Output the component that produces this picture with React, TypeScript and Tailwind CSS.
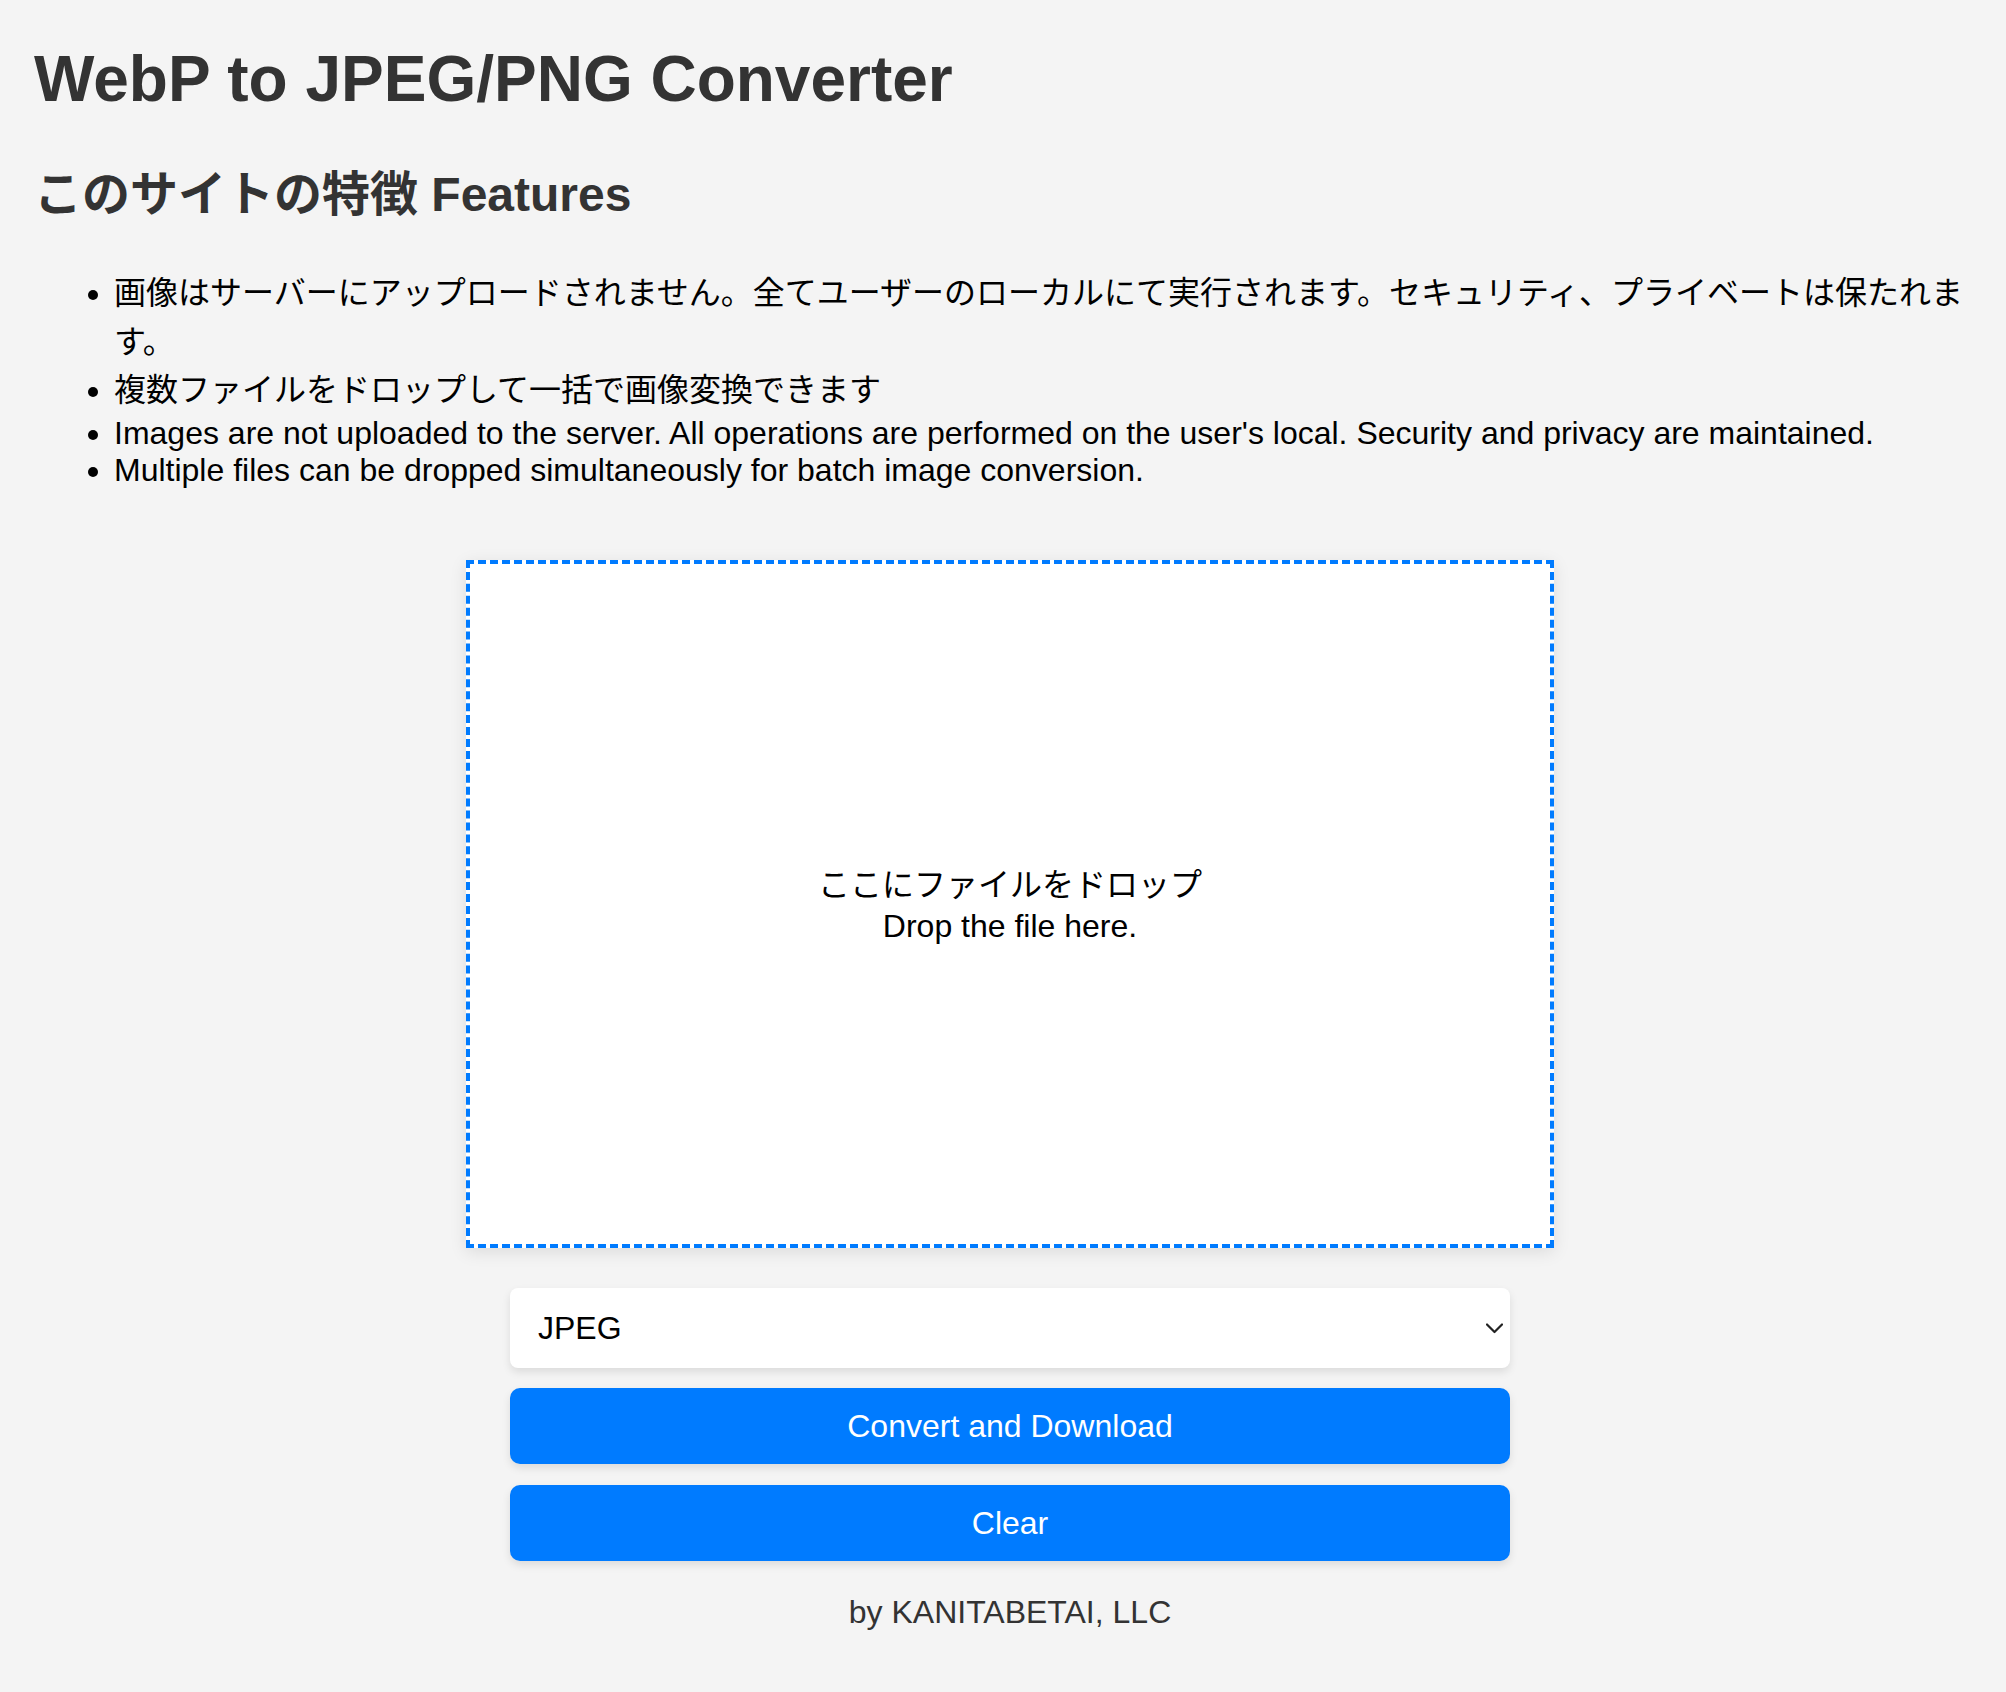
import React from "react";

export default function App() {
  return (
    <div
      className="min-h-[1692px] w-full bg-[#f4f4f4] px-[34px] text-[32px] text-black"
      style={{ fontFamily: '"Liberation Sans", "Noto Sans CJK JP", sans-serif' }}
    >
      <h1 className="pt-[42px] text-[64px] font-bold leading-[74px] text-[#333]">
        WebP to JPEG/PNG Converter
      </h1>
      <h2 className="mt-[50px] text-[48px] font-bold leading-[58px] text-[#333]">
        このサイトの特徴 Features
      </h2>
      <ul className="mt-[45px] list-disc pl-[80px]">
        <li className="leading-[48.5px]">
          画像はサーバーにアップロードされません。全てユーザーのローカルにて実行されます。セキュリティ、プライベートは保たれます。
        </li>
        <li className="leading-[48.5px]">複数ファイルをドロップして一括で画像変換できます</li>
        <li className="leading-[37px]">
          Images are not uploaded to the server. All operations are performed on the user's local. Security and privacy are maintained.
        </li>
        <li className="leading-[37px]">Multiple files can be dropped simultaneously for batch image conversion.</li>
      </ul>

      <div className="flex flex-col items-center pl-[14px]">
        <div className="mt-[71px] flex h-[688px] w-[1088px] flex-col items-center justify-center border-4 border-dashed border-[#007bff] bg-white text-center shadow-[0_4px_16px_rgba(0,0,0,0.1)]">
          <p className="leading-[46px]">ここにファイルをドロップ</p>
          <p className="leading-[37px]">Drop the file here.</p>
        </div>

        <div className="relative mt-[40px] h-[80px] w-[1000px]">
          <select
            className="h-full w-full appearance-none rounded-[8px] bg-white pl-[28px] text-[32px] text-black shadow-[0_4px_8px_rgba(0,0,0,0.1)] outline-none"
            style={{ fontFamily: '"Liberation Sans", sans-serif' }}
            defaultValue="jpeg"
          >
            <option value="jpeg">JPEG</option>
            <option value="png">PNG</option>
          </select>
          <svg
            className="pointer-events-none absolute right-[7px] top-[35px]"
            width="17"
            height="11"
            viewBox="0 0 17 11"
            fill="none"
          >
            <path d="M1 1.5 L8.5 9 L16 1.5" stroke="#222" strokeWidth="2.2" strokeLinecap="round" strokeLinejoin="round" />
          </svg>
        </div>

        <button className="mt-[20px] h-[76px] w-[1000px] rounded-[10px] bg-[#007bff] text-[32px] text-white shadow-[0_4px_8px_rgba(0,0,0,0.1)]">
          Convert and Download
        </button>
        <button className="mt-[21px] h-[76px] w-[1000px] rounded-[10px] bg-[#007bff] text-[32px] text-white shadow-[0_4px_8px_rgba(0,0,0,0.1)]">
          Clear
        </button>

        <p className="mt-[33px] leading-[37px] text-[#333]">by KANITABETAI, LLC</p>
      </div>
    </div>
  );
}
